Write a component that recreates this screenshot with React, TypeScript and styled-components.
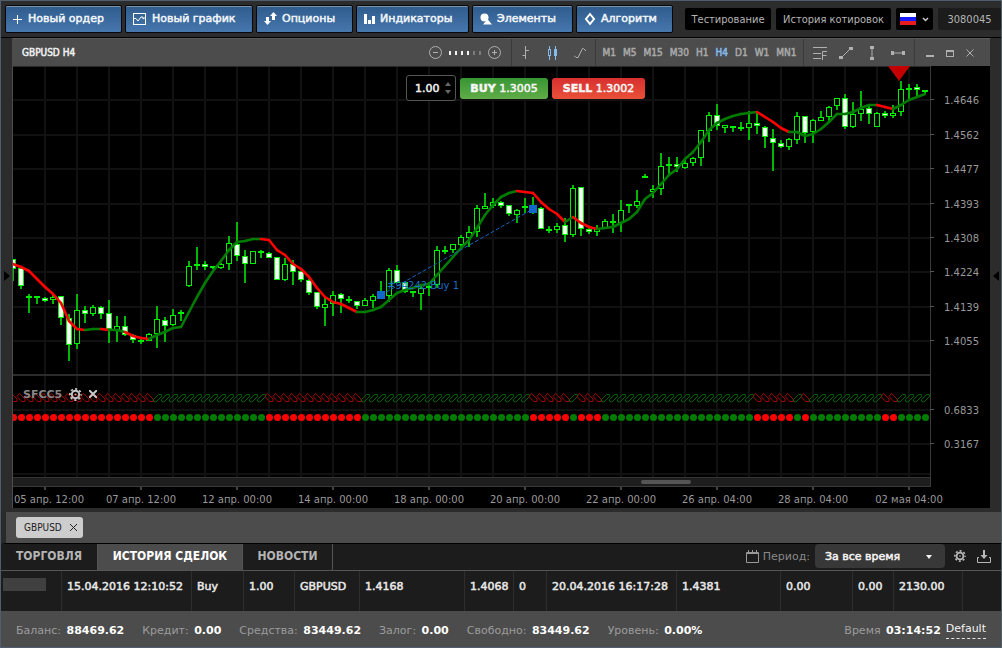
import React from "react";
import styled, { createGlobalStyle, css } from "styled-components";

const wide = `"DejaVu Sans", Verdana, sans-serif`;
const narrow = `"DejaVu Sans Condensed", "DejaVu Sans", Tahoma, sans-serif`;

const GlobalStyle = createGlobalStyle`
  * { box-sizing: border-box; }
  body { margin: 0; background: #2c2c2c; font-family: ${wide}; font-size: 11px; color: #eee; }
  button, input, select { font-family: inherit; font-size: inherit; color: inherit; margin: 0; }
  button { cursor: pointer; }
  svg { display: block; flex: none; }
`;

const semibold = css`
  -webkit-text-stroke: 0.5px currentColor;
`;

/* ---------- frame ---------- */

const Frame = styled.main`
  border: 1px solid #4f5e6e;
  background: #2c2c2c;
`;

const TopBar = styled.header`
  display: flex;
  align-items: center;
  height: 37px;
  padding: 0 0 0 4px;
  gap: 3px;
  border-bottom: 1px solid #000;
`;

const ActionButton = styled.button<{ $width: number }>`
  ${semibold}
  display: flex;
  align-items: center;
  gap: 5px;
  width: ${(p) => p.$width}px;
  height: 28px;
  padding: 0 0 1px 7px;
  border: 1px solid #05080c;
  border-radius: 2px;
  background: linear-gradient(#2f5b8c, #4677ad);
  box-shadow: inset 0 1px 0 #7d93ab;
  color: #f2f6fa;
  white-space: nowrap;
`;

const TopRight = styled.div`
  display: flex;
  gap: 5px;
  margin-left: auto;
`;

const DarkButton = styled.button<{ $width: number; $muted?: boolean }>`
  display: flex;
  align-items: center;
  justify-content: center;
  gap: 6px;
  width: ${(p) => p.$width}px;
  height: 22px;
  padding: 0;
  border: 0;
  border-radius: 2px;
  background: ${(p) => (p.$muted ? "#1c1c1c" : "#000")};
  font-family: ${narrow};
  color: #b4b4b4;
  white-space: nowrap;
`;

const Workspace = styled.div`
  display: grid;
  grid-template-columns: 11px minmax(0, 1fr) 11px;
  padding-bottom: 4px;
`;

const SideToggle = styled.button`
  display: flex;
  align-items: center;
  justify-content: center;
  padding: 6px 0 0;
  border: 0;
  background: #2c2c2c;
`;

/* ---------- chart window ---------- */

const ChartWindow = styled.section`
  border-left: 1px solid #4c4c4c;
  background: #000;
`;

const ChartHeader = styled.div`
  display: flex;
  align-items: stretch;
  height: 28px;
  background: #4c4c4c;
  border-top: 1px solid #5a5a5a;
  color: #b0b0b0;
`;

const ChartTitle = styled.h1`
  ${semibold}
  margin: 0 auto 0 0;
  padding-left: 9px;
  font: 10px/27px ${narrow};
  color: #f0f0f0;
`;

const ToolGroup = styled.div<{ $width: number; $gap: number }>`
  display: flex;
  align-items: center;
  justify-content: center;
  gap: ${(p) => p.$gap}px;
  width: ${(p) => p.$width}px;
  & + & { border-left: 1px solid #3a3a3a; }
`;

const WindowGroup = styled(ToolGroup)`
  padding-right: 6px;
  border-left: 1px solid #3a3a3a;
`;

const IconButton = styled.button`
  display: flex;
  padding: 0;
  border: 0;
  background: none;
  color: inherit;
`;

const FrameButton = styled.button<{ $active?: boolean }>`
  ${semibold}
  padding: 0;
  border: 0;
  background: none;
  font: 10px/14px ${narrow};
  color: ${(p) => (p.$active ? "#86b9ee" : "#a8a8a8")};
`;

const Zoom = styled.div`
  display: flex;
  gap: 4px;
`;

const ZoomStep = styled.i<{ $on: boolean }>`
  width: 2px;
  height: 4px;
  background: ${(p) => (p.$on ? "#f4f4f4" : "#7c7c7c")};
`;

const ChartBody = styled.div`
  position: relative;
`;

const ChartSvg = styled.svg`
  width: 100%;
  height: auto;
`;

const OrderPanel = styled.form`
  position: absolute;
  top: 9px;
  left: 393px;
  display: flex;
  align-items: center;
  gap: 4px;
`;

const Volume = styled.label`
  display: flex;
  align-items: center;
  width: 50px;
  height: 26px;
  padding-left: 8px;
  border: 1px solid #555;
  border-radius: 3px;
  background: #000;
`;

const VolumeInput = styled.input`
  ${semibold}
  width: 30px;
  padding: 0;
  border: 0;
  outline: 0;
  background: none;
  color: #f0f0f0;
`;

const TradeButton = styled.button<{ $side: "buy" | "sell" }>`
  ${semibold}
  width: ${(p) => (p.$side === "buy" ? 88 : 93)}px;
  height: 21px;
  padding: 0;
  border: 0;
  border-radius: 3px;
  background: ${(p) =>
    p.$side === "buy"
      ? "linear-gradient(#389634, #60ac48)"
      : "linear-gradient(#d83030, #e85038)"};
  color: #f6f6f6;
  white-space: nowrap;
`;

const IndicatorBar = styled.div`
  position: absolute;
  top: 321px;
  left: 10px;
  display: flex;
  align-items: center;
  height: 14px;
  gap: 7px;
  color: #c8c8c8;
`;

const IndicatorName = styled.span`
  font-weight: bold;
  color: #888;
`;

/* ---------- lower panel ---------- */

const DocTabs = styled.nav`
  display: flex;
  align-items: center;
  height: 32px;
  padding-left: 10px;
  border-left: 5px solid #2a2a2a;
  border-bottom: 1px solid #000;
  background: #4c4c4c;
`;

const DocTab = styled.button`
  display: flex;
  align-items: center;
  gap: 8px;
  height: 21px;
  padding: 0 6px 0 8px;
  border: 0;
  border-radius: 3px;
  background: #cdcdcd;
  font: 10px/21px ${narrow};
  color: #1c1c1c;
`;

const PanelTabs = styled.div`
  display: flex;
  align-items: stretch;
  height: 27px;
  padding-right: 9px;
  border-bottom: 1px solid #555;
  background: #1c1c1c;
`;

const PanelTab = styled.button<{ $width: number; $active?: boolean }>`
  width: ${(p) => p.$width}px;
  padding: 0 0 2px;
  border: 0;
  border-right: 1px solid #555;
  background: ${(p) => (p.$active ? "#4c4c4c" : "#1c1c1c")};
  font: bold 12px/24px ${narrow};
  color: ${(p) => (p.$active ? "#fff" : "#b4b4b4")};
`;

const Filters = styled.div`
  display: flex;
  align-items: center;
  gap: 4px;
  margin-left: auto;
  padding-bottom: 2px;
  color: #b8b8b8;
`;

const FilterLabel = styled.label`
  margin-right: 1px;
  color: #888;
`;

const SelectBox = styled.div`
  position: relative;
  margin-right: 5px;
  svg { position: absolute; right: 13px; top: 11px; pointer-events: none; }
`;

const PeriodSelect = styled.select`
  ${semibold}
  appearance: none;
  width: 130px;
  height: 24px;
  padding: 0 24px 0 10px;
  border: 0;
  border-radius: 4px;
  background: #383838;
  color: #f4f4f4;
`;

const Deals = styled.table`
  width: 100%;
  table-layout: fixed;
  border-collapse: separate;
  border-spacing: 0;
  background: #1c1c1c;
`;

const Cell = styled.td`
  ${semibold}
  height: 40px;
  padding: 9px 0 0 5px;
  border-right: 1px solid #2e2e2e;
  line-height: 14px;
  vertical-align: top;
  white-space: nowrap;
  color: #e8e8e8;
  &:first-child { padding: 7px 0 0 2px; }
  &:last-child { border-right: 0; }
`;

const HiddenId = styled.div`
  width: 43px;
  height: 13px;
  background: #404040;
`;

const StatusBar = styled.footer`
  display: flex;
  align-items: center;
  height: 36px;
  padding: 2px 15px 0;
  gap: 18px;
  background: #4c4c4c;
  white-space: nowrap;
`;

const Stat = styled.span`
  color: #9c9c9c;
  b { margin-left: 2px; color: #fff; }
`;

const Clock = styled(Stat)`
  margin-left: auto;
`;

const ProfileLink = styled.a`
  margin-left: -13px;
  padding-bottom: 2px;
  border-bottom: 1px dashed #e8e8e8;
  line-height: 14px;
  color: #f4f4f4;
  text-decoration: none;
`;

/* ---------- chart data ---------- */

// [high, body top, body bottom, low, filled]
type Candle = [number, number, number, number, number];

const candles: Candle[] = [
  [259, 259, 269, 281, 1], [268, 268, 286, 289, 1], [294, 296, 298, 313, 0], [296, 296, 298, 304, 0],
  [297, 298, 301, 302, 1], [295, 297, 300, 304, 0], [296, 296, 318, 325, 1], [314, 318, 345, 361, 1],
  [294, 310, 344, 349, 0], [306, 310, 314, 323, 1], [305, 307, 314, 316, 0], [306, 307, 314, 319, 1],
  [300, 313, 329, 343, 1], [316, 326, 330, 342, 0], [316, 326, 335, 336, 1], [334, 335, 340, 343, 1],
  [339, 340, 342, 344, 0], [333, 334, 341, 341, 0], [306, 319, 334, 348, 0], [317, 320, 326, 342, 1],
  [309, 315, 325, 326, 0], [310, 312, 314, 321, 0], [261, 266, 286, 287, 0], [247, 264, 266, 270, 0],
  [261, 264, 267, 270, 1], [266, 266, 268, 269, 0], [263, 264, 268, 269, 0], [236, 243, 264, 270, 0],
  [222, 244, 256, 261, 1], [250, 256, 264, 283, 1], [251, 251, 264, 264, 0], [250, 251, 253, 258, 0],
  [252, 253, 258, 258, 1], [257, 257, 280, 280, 1], [258, 264, 280, 281, 0], [260, 264, 272, 285, 1],
  [271, 271, 280, 282, 1], [279, 280, 293, 295, 1], [292, 292, 307, 309, 1], [298, 304, 308, 326, 0],
  [291, 295, 304, 316, 0], [293, 294, 299, 313, 1], [296, 299, 301, 303, 0], [301, 301, 306, 309, 1],
  [298, 300, 306, 306, 0], [294, 296, 301, 308, 0], [281, 291, 299, 299, 0], [268, 270, 296, 302, 0],
  [265, 270, 283, 283, 1], [282, 282, 292, 293, 1], [291, 291, 293, 297, 0], [286, 288, 294, 310, 0],
  [282, 286, 288, 296, 0], [246, 250, 285, 288, 0], [246, 250, 252, 254, 0], [244, 244, 250, 253, 0],
  [235, 237, 245, 249, 0], [226, 232, 238, 247, 0], [205, 208, 232, 237, 0], [193, 206, 209, 209, 0],
  [198, 202, 206, 208, 0], [201, 202, 206, 208, 1], [205, 205, 214, 216, 1], [209, 210, 215, 223, 0],
  [198, 206, 208, 213, 0], [197, 206, 212, 214, 0], [207, 208, 229, 229, 1], [226, 229, 231, 233, 0],
  [223, 226, 230, 233, 0], [218, 225, 235, 242, 1], [185, 188, 235, 237, 0], [187, 187, 229, 236, 1],
  [228, 229, 232, 234, 1], [225, 229, 232, 236, 0], [219, 221, 228, 229, 0], [214, 221, 223, 233, 1],
  [200, 210, 223, 232, 0], [204, 204, 206, 213, 0], [190, 201, 206, 208, 0], [174, 176, 178, 178, 0],
  [185, 189, 192, 198, 0], [153, 166, 189, 195, 0], [157, 164, 166, 175, 0], [157, 164, 167, 172, 1],
  [159, 163, 168, 169, 0], [157, 158, 163, 166, 0], [130, 130, 158, 166, 0], [112, 115, 131, 142, 0],
  [104, 115, 126, 130, 1], [125, 125, 128, 133, 0], [126, 126, 128, 132, 0], [122, 127, 129, 131, 0],
  [111, 123, 128, 140, 0], [111, 123, 126, 134, 1], [126, 127, 137, 148, 1], [129, 138, 143, 171, 1],
  [140, 143, 147, 148, 1], [138, 139, 147, 150, 0], [112, 116, 140, 144, 0], [116, 116, 133, 143, 1],
  [119, 120, 132, 143, 0], [111, 117, 121, 121, 0], [106, 107, 117, 121, 0], [98, 98, 106, 110, 0],
  [94, 98, 127, 129, 1], [102, 114, 127, 128, 0], [91, 109, 114, 121, 0], [106, 108, 114, 124, 1],
  [112, 113, 127, 127, 0], [111, 113, 116, 118, 1], [105, 113, 116, 118, 0], [81, 89, 112, 116, 0],
  [84, 88, 90, 99, 0], [84, 87, 90, 97, 1], [90, 90, 92, 93, 0],
];

const average = [
  264, 267, 271, 279, 287, 294, 303, 321, 329, 330, 329, 329, 330, 330, 332, 336, 338, 339, 335, 332,
  328, 327, 312, 297, 283, 271, 261, 250, 242, 241, 239, 239, 240, 250, 255, 264, 269, 277, 288, 297,
  302, 304, 308, 312, 312, 310, 307, 300, 293, 290, 288, 285, 284, 275, 266, 257, 248, 240, 228, 215,
  205, 197, 193, 191, 192, 193, 202, 209, 214, 222, 217, 223, 227, 229, 228, 227, 223, 219, 212, 199,
  193, 184, 175, 169, 159, 152, 142, 130, 123, 119, 116, 114, 113, 112, 117, 122, 128, 132, 132, 136,
  134, 129, 122, 114, 114, 112, 108, 105, 105, 107, 109, 105, 100, 97, 94,
];

type Range = [number, number];
const inRanges = (ranges: Range[], i: number) => ranges.some(([a, b]) => i >= a && i <= b);
const fallingAverage: Range[] = [[1, 9], [12, 12], [15, 17], [32, 43], [64, 69], [71, 73], [94, 97], [109, 110]];
const fallingSignal: Range[] = [[0, 17], [32, 43], [65, 69], [71, 73], [93, 97], [99, 99], [109, 110]];

const priceTicks: [number, string][] = [
  [100, "1.4646"], [135, "1.4562"], [169, "1.4477"], [204, "1.4393"],
  [238, "1.4308"], [272, "1.4224"], [307, "1.4139"], [341, "1.4055"],
  [410, "0.6833"], [444, "0.3167"],
];

const dates = [
  "05 апр. 12:00", "07 апр. 12:00", "12 апр. 00:00", "14 апр. 00:00", "18 апр. 00:00",
  "20 апр. 00:00", "22 апр. 00:00", "26 апр. 04:00", "28 апр. 04:00", "02 мая 04:00",
];

const step = 8;
const xAt = (i: number) => 13 + i * step;
// date labels are centred on their tick but never start left of the plot
const labelX = (i: number) => Math.max(49, 45 + i * 96);

function CandleMark({ x, data }: { x: number; data: Candle }) {
  const [high, top, bottom, low, filled] = data;
  return (
    <g>
      <rect x={x - 1} y={high} width={2} height={Math.max(low - high, 1)} fill="#00b800" />
      <rect
        x={x - 2.5}
        y={top + 0.5}
        width={5}
        height={Math.max(bottom - top - 1, 1)}
        fill={filled ? "#fff" : "#000"}
        stroke="#00f000"
      />
    </g>
  );
}

function Chart() {
  return (
    <ChartSvg viewBox="13 66 977 442" role="img" aria-label="GBPUSD H4">
      <defs>
        <clipPath id="plot"><rect x="13" y="66" width="917" height="422" /></clipPath>
      </defs>
      <g fill="#111">
        {Array.from({ length: 28 }, (_, i) => (
          <rect key={i} x={44 + i * 32} y={66} width={2} height={411} />
        ))}
        {priceTicks.map(([y]) => <rect key={y} x={13} y={y - 1} width={917} height={2} />)}
        <rect x={13} y={473} width={917} height={2} />
      </g>
      <rect x={13} y={374} width={917} height={2} fill="#2c2c2c" />
      <rect x={13} y={66} width={917} height={1} fill="#2a2a2a" />
      <rect x={13} y={477} width={917} height={10} fill="#1e1e1e" />
      <rect x={13} y={477} width={917} height={1} fill="#333" />
      <rect x={13} y={486} width={918} height={1} fill="#3a3a3a" />
      <rect x={930} y={66} width={1} height={421} fill="#3a3a3a" />
      <rect x={641} y={480} width={50} height={4} rx={2} fill="#555" />

      <g clipPath="url(#plot)">
        {candles.map((c, i) => <CandleMark key={i} x={xAt(i)} data={c} />)}
        {average.slice(1).map((y, i) => (
          <line
            key={i}
            x1={xAt(i)} y1={average[i]} x2={xAt(i + 1)} y2={y}
            stroke={inRanges(fallingAverage, i + 1) ? "#f00" : "#007d00"}
            strokeWidth={2.6}
            strokeLinecap="round"
          />
        ))}
        {candles.map((_, i) => {
          const x = xAt(i);
          const down = inRanges(fallingSignal, i);
          return (
            <g key={i}>
              <path
                d={down
                  ? `M${x - 4} 396.5l2.500-3 5.500 5.500v2.500h-3.500z`
                  : `M${x - 3.5} 401.5v-2l5-5h3v2l-5.500 5.500z`}
                fill="none"
                stroke={down ? "#b40000" : "#006c00"}
                strokeWidth={0.9}
              />
              <ellipse cx={x + 0.5} cy={417.5} rx={3.5} ry={3.6} fill={down ? "#f00" : "#007d00"} />
            </g>
          );
        })}
      </g>

      <line x1={381} y1={295} x2={533} y2={209} stroke="#1565c0" strokeDasharray="4 2" />
      <rect x={377} y={291} width={8} height={8} fill="#1068c8" />
      <rect x={529} y={205} width={8} height={8} fill="#1068c8" />
      <text x={387} y={289} fontFamily={wide} fontSize={10} fill="#1a6bc4">#94242 Buy 1</text>
      <path d="M888 66h22l-11 15z" fill="#c40000" />

      <g fontFamily={wide} fontSize={10} fill="#999">
        {priceTicks.map(([y, label]) => (
          <g key={y}>
            <rect x={930} y={y - 1} width={4} height={1} fill="#555" />
            <text x={944} y={y + 4}>{label}</text>
          </g>
        ))}
        {dates.map((label, i) => (
          <g key={label}>
            <text x={labelX(i)} y={503} textAnchor="middle">{label}</text>
            <rect x={44 + i * 96} y={487} width={2} height={3} fill="#444" />
          </g>
        ))}
      </g>
    </ChartSvg>
  );
}

/* ---------- icons ---------- */

const GearIcon = ({ size = 12 }: { size?: number }) => (
  <svg width={size} height={size} viewBox="0 0 12 12" fill="none" stroke="currentColor">
    <circle cx="6" cy="6" r="3.4" strokeWidth="1.8" />
    <circle cx="6" cy="6" r="5.1" strokeWidth="1.6" strokeDasharray="2 2" strokeDashoffset="1" />
    <circle cx="6" cy="6" r="0.8" fill="currentColor" stroke="none" />
  </svg>
);

const icons = {
  plus: <svg width="10" height="10"><path d="M4.500 1v9M0 5.500h9" stroke="#fff" fill="none" /></svg>,
  chart: <svg width="14" height="12" fill="none" stroke="#fff"><rect x=".5" y=".5" width="12" height="11" /><path d="M1 5.500h2l2 2.500 3-4h2v2l3-2" /></svg>,
  options: <svg width="13" height="15" fill="#fff"><path d="M2 6h3v4h2l-3.500 4-3.500-4h2zM8 9V5H6l3.500-4L13 5h-2v4z" /></svg>,
  bars: <svg width="11" height="11" fill="#fff"><path d="M0 1h3v10H0zM4 7h3v4H4zM8 3h3v8H8z" /></svg>,
  shapes: <svg width="12" height="12" fill="#fff"><circle cx="4.500" cy="4.500" r="4" /><path d="M7.500 6l4.500 5.500H3z" /></svg>,
  diamond: <svg width="12" height="14" fill="none" stroke="#fff" strokeWidth="2"><path d="M6 2l4 5-4 5-4-5z" /></svg>,
};

const actions: [keyof typeof icons, string, number][] = [
  ["plus", "Новый ордер", 117],
  ["chart", "Новый график", 128],
  ["options", "Опционы", 97],
  ["bars", "Индикаторы", 113],
  ["shapes", "Элементы", 101],
  ["diamond", "Алгоритм", 97],
];

const timeframes = ["M1", "M5", "M15", "M30", "H1", "H4", "D1", "W1", "MN1"];

const widths = [61, 130, 52, 51, 65, 105, 49, 33, 130, 104, 72, 41, 69];
const deal = [
  "15.04.2016 12:10:52", "Buy", "1.00", "GBPUSD", "1.4168", "1.4068", "0",
  "20.04.2016 16:17:28", "1.4381", "0.00", "0.00", "2130.00", "",
];

const stats = [
  ["Баланс:", "88469.62"], ["Кредит:", "0.00"], ["Средства:", "83449.62"],
  ["Залог:", "0.00"], ["Свободно:", "83449.62"], ["Уровень:", "0.00%"],
];

export default function App() {
  return (
    <Frame>
      <GlobalStyle />
      <TopBar>
        {actions.map(([icon, label, width]) => (
          <ActionButton key={label} $width={width}>{icons[icon]}{label}</ActionButton>
        ))}
        <TopRight>
          <DarkButton $width={86}>Тестирование</DarkButton>
          <DarkButton $width={115}>История котировок</DarkButton>
          <DarkButton $width={37} aria-label="Русский">
            <svg width="16" height="12"><path fill="#fff" d="M0 0h16v4H0z" /><path fill="#1a1aff" d="M0 4h16v4H0z" /><path fill="#e81c1c" d="M0 8h16v4H0z" /></svg>
            <svg width="7" height="5" fill="none" stroke="#ccc" strokeWidth="1.500"><path d="M1 1l2.500 2.500L6 1" /></svg>
          </DarkButton>
          <DarkButton $width={63} $muted>3080045</DarkButton>
        </TopRight>
      </TopBar>

      <Workspace>
        <SideToggle aria-label="Открыть левую панель">
          <svg width="6" height="12"><path d="M0 1l6 5-6 5z" fill="#000" /></svg>
        </SideToggle>
        <ChartWindow>
          <ChartHeader>
            <ChartTitle>GBPUSD H4</ChartTitle>
            <ToolGroup $width={93} $gap={7}>
              <IconButton aria-label="Уменьшить">
                <svg width="13" height="13" fill="none" stroke="currentColor"><circle cx="6.500" cy="6.500" r="6" /><path d="M4 6.500h5" /></svg>
              </IconButton>
              <Zoom>{[1, 2, 3, 4, 5, 6].map((n) => <ZoomStep key={n} $on={n < 5} />)}</Zoom>
              <IconButton aria-label="Увеличить">
                <svg width="13" height="13" fill="none" stroke="currentColor"><circle cx="6.500" cy="6.500" r="6" /><path d="M4 6.500h5M6.500 4v5" /></svg>
              </IconButton>
            </ToolGroup>
            <ToolGroup $width={84} $gap={15}>
              <IconButton aria-label="Бары">
                <svg width="12" height="14" fill="none" stroke="currentColor"><path d="M5.500 0v13M2.500 9.500h3M6 4.500h3" /></svg>
              </IconButton>
              <IconButton aria-label="Свечи">
                <svg width="12" height="14" fill="none" stroke="#86b9ee"><path d="M2.500 0v3M2.500 10v4M8.500 0v14" /><rect x="1.500" y="3.500" width="2" height="6" /><rect x="7.500" y="3.500" width="2" height="6" fill="#86b9ee" /></svg>
              </IconButton>
              <IconButton aria-label="Линия">
                <svg width="13" height="14" fill="none" stroke="currentColor"><path d="M0 9.500l2 2h2L8.500 2.500h1L12 5" /></svg>
              </IconButton>
            </ToolGroup>
            <ToolGroup $width={208} $gap={7}>
              {timeframes.map((t) => <FrameButton key={t} $active={t === "H4"}>{t}</FrameButton>)}
            </ToolGroup>
            <ToolGroup $width={111} $gap={12}>
              <IconButton aria-label="Фибоначчи">
                <svg width="14" height="14" fill="none" stroke="currentColor"><path d="M0 1.500h14M0 7.500h8M0 12.500h8M9.500 14V5.500H14M9.500 9.500h4" /></svg>
              </IconButton>
              <IconButton aria-label="Линия тренда">
                <svg width="14" height="14" stroke="currentColor" fill="currentColor"><path d="M2 12L12 2" /><path stroke="none" d="M0 10h4v3H0zM10 1h4v3h-4z" /></svg>
              </IconButton>
              <IconButton aria-label="Вертикальная линия">
                <svg width="14" height="14" fill="currentColor"><path d="M6.500 2h1v10h-1zM5 0h4v3H5zM5 11h4v3H5z" /></svg>
              </IconButton>
              <IconButton aria-label="Горизонтальная линия">
                <svg width="14" height="14" fill="currentColor"><path d="M2 6.500h10v1H2zM0 5h3v4H0zM11 5h3v4h-3z" /></svg>
              </IconButton>
            </ToolGroup>
            <WindowGroup $width={76} $gap={12}>
              <IconButton aria-label="Свернуть">
                <svg width="8" height="8" fill="currentColor"><path d="M0 6h8v2H0z" /></svg>
              </IconButton>
              <IconButton aria-label="Развернуть">
                <svg width="8" height="8" fill="none" stroke="currentColor"><rect x=".5" y="1.500" width="7" height="6" /><path d="M0 2h8" strokeWidth="2" /></svg>
              </IconButton>
              <IconButton aria-label="Закрыть">
                <svg width="8" height="8" fill="none" stroke="currentColor"><path d="M.5.5l7 7M7.500.5l-7 7" /></svg>
              </IconButton>
            </WindowGroup>
          </ChartHeader>
          <ChartBody>
            <Chart />
            <OrderPanel>
              <Volume>
                <VolumeInput aria-label="Объём" defaultValue="1.00" />
                <svg width="6" height="12" fill="#666"><path d="M0 4l3-4 3 4zM0 8h6l-3 4z" /></svg>
              </Volume>
              <TradeButton type="button" $side="buy"><b>BUY</b> 1.3005</TradeButton>
              <TradeButton type="button" $side="sell"><b>SELL</b> 1.3002</TradeButton>
            </OrderPanel>
            <IndicatorBar>
              <IndicatorName>SFCC5</IndicatorName>
              <IconButton aria-label="Настройки индикатора"><GearIcon size={13} /></IconButton>
              <IconButton aria-label="Удалить индикатор">
                <svg width="8" height="8" fill="none" stroke="currentColor" strokeWidth="2"><path d="M0 0l8 8M8 0L0 8" /></svg>
              </IconButton>
            </IndicatorBar>
          </ChartBody>
        </ChartWindow>
        <SideToggle aria-label="Открыть правую панель">
          <svg width="6" height="12"><path d="M6 1L0 6l6 5z" fill="#000" /></svg>
        </SideToggle>
      </Workspace>

      <DocTabs>
        <DocTab>
          GBPUSD
          <svg width="7" height="7" fill="none" stroke="#222"><path d="M0 0l7 7M7 0L0 7" /></svg>
        </DocTab>
      </DocTabs>

      <PanelTabs>
        <PanelTab $width={97}>ТОРГОВЛЯ</PanelTab>
        <PanelTab $width={145} $active>ИСТОРИЯ СДЕЛОК</PanelTab>
        <PanelTab $width={90}>НОВОСТИ</PanelTab>
        <Filters>
          <svg width="13" height="13" fill="none" stroke="#999"><path d="M.5 2.500h12v10H.5zM1 3.500h11" /><path d="M2.500 0v3M6.500 0v3M10.500 0v3" /></svg>
          <FilterLabel htmlFor="period">Период:</FilterLabel>
          <SelectBox>
            <PeriodSelect id="period"><option>За все время</option></PeriodSelect>
            <svg width="6" height="4"><path d="M0 0h6L3 4z" fill="#f4f4f4" /></svg>
          </SelectBox>
          <IconButton aria-label="Настройки"><GearIcon /></IconButton>
          <IconButton aria-label="Экспорт">
            <svg width="22" height="13" fill="none" stroke="currentColor"><path d="M10 7.500H8.500v5h13v-5H20" transform="translate(-1 0)" /><path d="M14 0v5" strokeWidth="2" /><path d="M10.500 5h7L14 9z" fill="currentColor" stroke="none" /></svg>
          </IconButton>
        </Filters>
      </PanelTabs>

      <Deals>
        <colgroup>{widths.map((w, i) => <col key={i} style={{ width: w }} />)}<col /></colgroup>
        <tbody>
          <tr>
            <Cell><HiddenId /></Cell>
            {deal.map((value, i) => <Cell key={i}>{value}</Cell>)}
          </tr>
        </tbody>
      </Deals>

      <StatusBar>
        {stats.map(([label, value]) => <Stat key={label}>{label} <b>{value}</b></Stat>)}
        <Clock>Время <b>03:14:52</b></Clock>
        <ProfileLink href="#profile">Default</ProfileLink>
      </StatusBar>
    </Frame>
  );
}
